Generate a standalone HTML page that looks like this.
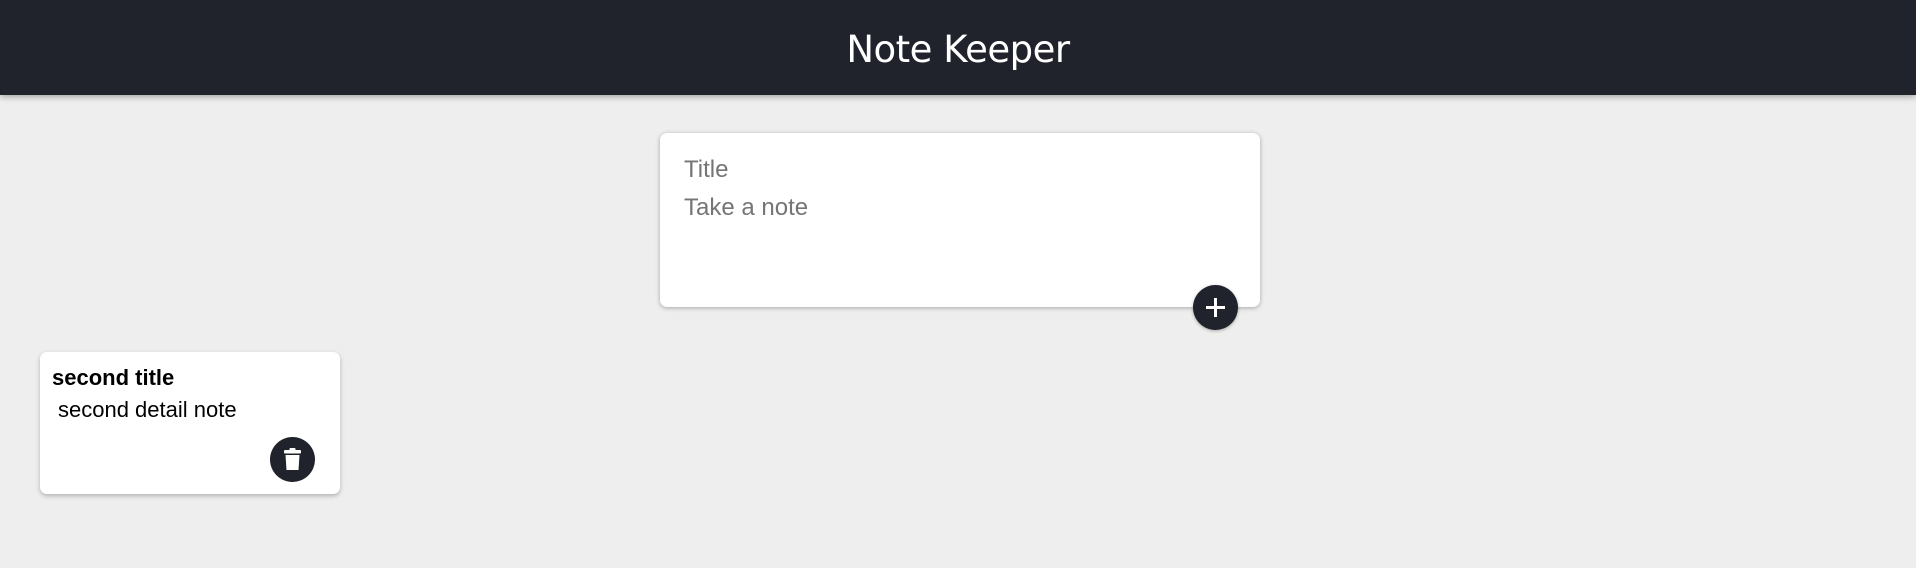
<!DOCTYPE html>
<html><head><style>
body{margin:0;width:1916px;height:568px;background:#eeeeee;font-family:"Liberation Sans",Arial,sans-serif;position:relative;overflow:hidden}
header{position:absolute;left:0;top:0;width:1916px;height:95px;background:#20232c;box-shadow:0 2px 6px rgba(0,0,0,.3)}
header h1{margin:0;text-align:center;color:#fff;font-family:"Comic Sans MS","DejaVu Sans",cursive;font-weight:normal;font-size:37px;line-height:100px;letter-spacing:-0.5px}
.form{position:absolute;left:660px;top:133px;width:600px;height:174px;background:#fff;border-radius:7px;box-shadow:0 1px 5px rgba(0,0,0,.3)}
.form div{position:absolute;left:24px;color:#757575;font-size:24px}
.btn{position:absolute;width:45px;height:45px;border-radius:50%;background:#20232c;box-shadow:0 1px 3px rgba(0,0,0,.3)}
.note{position:absolute;left:40px;top:352px;width:300px;height:142px;background:#fff;border-radius:7px;box-shadow:0 2px 5px rgba(0,0,0,.25)}
</style></head><body>
<header><h1>Note Keeper</h1></header>
<div class="form">
<div style="top:23px">Title</div>
<div style="top:61px">Take a note</div>
</div>
<div class="btn" style="left:1193px;top:285px"><svg width="45" height="45"><path d="M22.5 13v19M13 22.5h19" stroke="#fff" stroke-width="3"/></svg></div>
<div class="note">
<div style="position:absolute;left:12px;top:13px;font-weight:bold;font-size:22px">second title</div>
<div style="position:absolute;left:18px;top:45px;font-size:22px">second detail note</div>
<div class="btn" style="left:230px;top:85px;box-shadow:none"><svg width="45" height="45"><rect x="14" y="13" width="17" height="3.5" rx="1" fill="#fff"/><rect x="19.5" y="11" width="6" height="3" rx="1" fill="#fff"/><path d="M15.5 18h14l-1 15h-12z" fill="#fff"/></svg></div>
</div>
</body></html>
